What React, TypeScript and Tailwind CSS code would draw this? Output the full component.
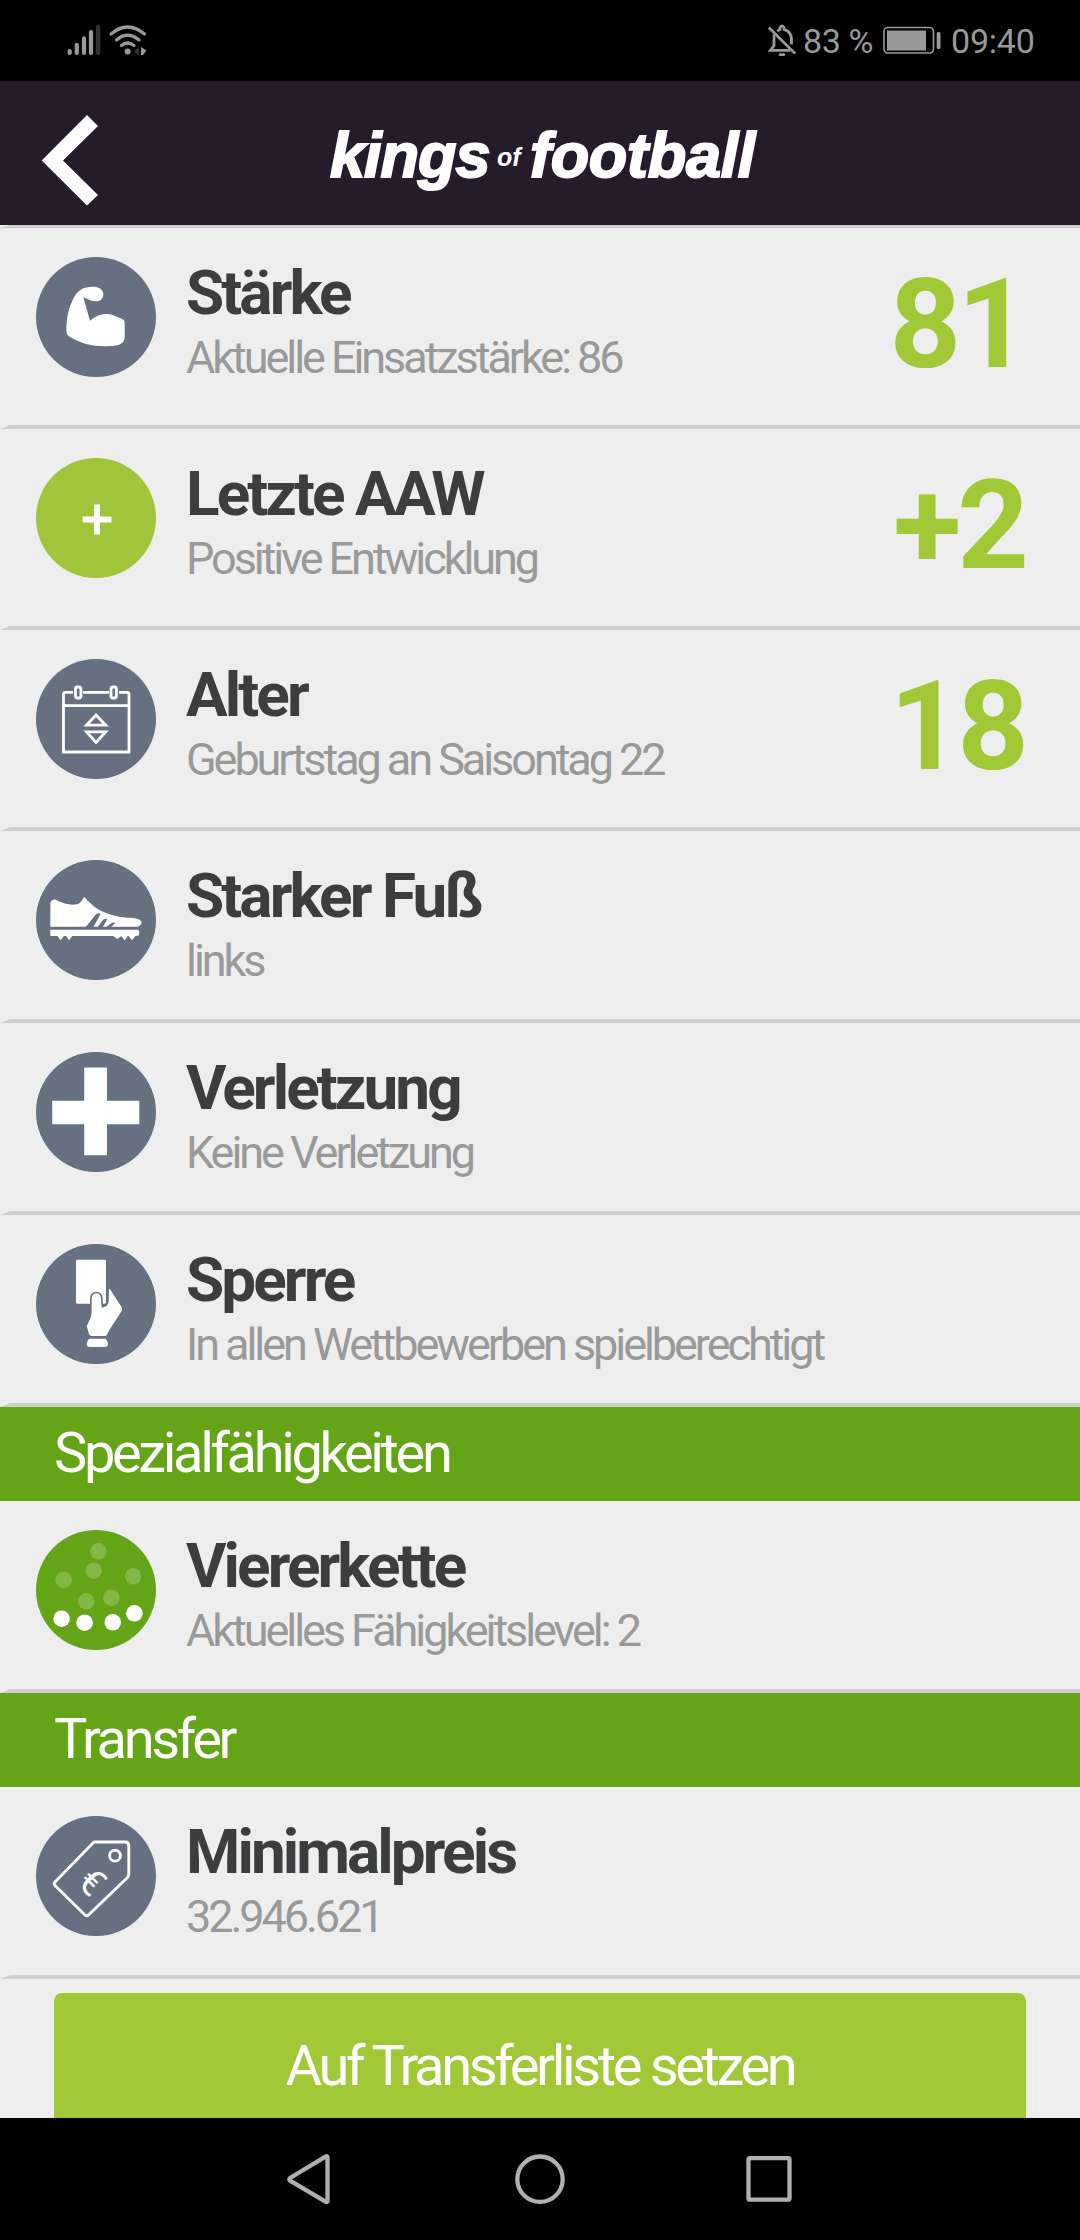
import { ReactNode } from "react";

const SLATE = "#667080";

function ArmIcon() {
  return (
    <svg viewBox="0 0 360 360" className="size-full" fill="#fff">
      <path d="M162 191L142 121C155 126 163 132 177 133C196 134 203 122 202 110C200 96 188 89 172 89C145 88 125 98 112 125C98 152 92 180 91 215C91 232 94 236 106 242C135 258 165 267 195 267C215 268 232 268 246 264C262 259 266 250 266 236L266 200C267 190 262 187 252 183C235 175 222 170 207 171C188 172 178 180 162 191Z" />
    </svg>
  );
}

function PlusIcon() {
  return (
    <svg viewBox="0 0 120 120" className="size-full" stroke="#fff" strokeWidth="6">
      <path d="M46.5 61.5H75.5M61 46.5V76.5" />
    </svg>
  );
}

function CalendarIcon() {
  return (
    <svg viewBox="0 0 120 120" className="size-full" fill="none" stroke="#fff" strokeWidth="2.8">
      <path d="M37 33.3H29.5Q27.5 33.3 27.5 35.5V93H93V35.5Q93 33.3 91 33.3H83M47 33.3H73M27.5 46.7H93" />
      <rect x="39.5" y="28" width="5.4" height="11" rx="2" />
      <rect x="75" y="28" width="5.4" height="11" rx="2" />
      <path d="M60 56L69.7 66.2H50.5ZM60 83.5L69.7 72.8H50.5Z" />
    </svg>
  );
}

function ShoeIcon() {
  return (
    <svg viewBox="0 0 360 360" className="size-full" fill="#fff">
      <path d="M43 130C43 122 52 116 59 119C75 127 92 134 112 134C135 134 138 120 144 111C150 115 153 120 160 127C185 152 215 164 250 170C275 174 295 172 308 178C320 184 320 194 306 200H43Z" />
      <path
        fill={SLATE}
        d="M147 202L155 194L178 165Q184 158 194 161L172 202ZM184 202L202 179Q207 174 214 177L200 202ZM210 202L224 191Q230 185 238 189L224 202Z"
      />
      <path d="M43 209H306Q314 215 307 227L298 228L288 241L278 228H276L266 241L256 228L244 237L232 228H109L99 241L91 228H84L74 241L64 228H43Z" />
    </svg>
  );
}

function CrossIcon() {
  return (
    <svg viewBox="0 0 120 120" className="size-full" fill="#fff">
      <path d="M48.2 15.5H71V48.7H103.3V72.3H71V103.3H48.2V72.3H16.2V48.7H48.2Z" />
    </svg>
  );
}

function CardIcon() {
  return (
    <svg viewBox="0 0 360 360" className="size-full" fill="#fff">
      <rect x="120" y="47" width="90" height="132" rx="4" />
      <path
        stroke={SLATE}
        strokeWidth="10"
        paintOrder="stroke"
        d="M167 164Q168 148 181 148Q194 148 195 164L197 191Q216 190 218 172L219 134Q222 134 225 140L257 190Q260 195 257 201L220 258L213 272Q211 276 206 276H166Q160 276 158 268L152 246L164 221Q167 210 167 200Z"
      />
      <path d="M159 284H209Q216 292 216 300Q216 309 207 309H161Q152 309 152 300Q152 292 159 284Z" />
    </svg>
  );
}

function FormationIcon() {
  const others = [
    [62.4, 21.3],
    [57.7, 40.7],
    [27.7, 49.7],
    [97.1, 46.3],
    [75.4, 67.7],
    [50.3, 71.3],
  ];
  const defence = [
    [25.6, 88.7],
    [48.6, 92.7],
    [76.8, 92.3],
    [98.4, 83.3],
  ];
  return (
    <svg viewBox="0 0 120 120" className="size-full" fill="#fff">
      {others.map(([x, y]) => (
        <circle key={x} cx={x} cy={y} r="8.3" opacity="0.2" />
      ))}
      {defence.map(([x, y]) => (
        <circle key={x} cx={x} cy={y} r="8.3" />
      ))}
    </svg>
  );
}

function TagIcon() {
  return (
    <svg viewBox="0 0 120 120" className="size-full">
      <g fill="none" stroke="#fff" strokeWidth="2.9" strokeLinejoin="round">
        <path d="M58.8 26H89Q92.8 26 92.8 30V58Q92.8 60 91.5 61.5L52.5 99Q50.8 100.6 49 99L19 69.5Q17.4 67.8 19 66L57 27Q58 26 58.8 26Z" />
        <circle cx="79" cy="39.7" r="5.4" />
      </g>
      <text
        transform="translate(56 66) rotate(45)"
        textAnchor="middle"
        y="12.5"
        fill="#fff"
        className="font-[Roboto] text-[37px]"
      >
        €
      </text>
    </svg>
  );
}

type RowProps = {
  icon: ReactNode;
  color?: string;
  title: string;
  text: string;
  value?: string;
};

function Row({ icon, color = "bg-[#667080]", title, text, value }: RowProps) {
  return (
    <div
      className={`flex shrink-0 border-b-4 border-l-[10px] border-b-[#cfcfcf] border-l-transparent pl-[26px] ${
        value ? "h-[201px]" : "h-48"
      }`}
    >
      <div className={`mt-[29px] size-[120px] shrink-0 overflow-hidden rounded-full ${color}`}>{icon}</div>
      <div className="ml-[30px] grow pt-[33px] whitespace-nowrap">
        <h2 className="text-[62px] leading-16 font-bold tracking-[-2.9px] text-[#3c3d3f]">{title}</h2>
        <p className="text-[45px] leading-[65px] tracking-[-3.06px] text-[#999]">{text}</p>
      </div>
      {value && (
        <div className="pt-[34px] pr-[55px] text-right text-[125px] leading-[125px] font-bold tracking-[-4px] text-[#a0c837]">
          {value}
        </div>
      )}
    </div>
  );
}

function Section({ title }: { title: string }) {
  return (
    <div className="h-[94px] shrink-0 bg-[#64a518] pl-[54px] text-[56px] leading-[92px] tracking-[-3.35px] text-white">
      {title}
    </div>
  );
}

function StatusBar() {
  return (
    <div className="flex h-[81px] shrink-0 items-start bg-black text-[34px] text-[#999]">
      <svg width="160" height="81" fill="none" stroke="#999" strokeLinecap="round">
        <g strokeWidth="4.2">
          <path d="M69.7 51.1V52.9M76.8 44.8V52.9M84 38.4V52.9M91 32V52.9" />
          <path d="M98.1 26.8V52.9" stroke="#333" />
        </g>
        <g strokeWidth="3.2">
          <path d="M111 34Q127.5 20 144.5 34M116.5 40Q127.5 30.5 139 40M121.5 45.5Q127.5 40.5 134 45.5" />
        </g>
        <circle cx="127.6" cy="51.5" r="3" fill="#999" stroke="none" />
        <path d="M134 51.5L139 47V55Z" fill="#333" stroke="none" />
        <path d="M141 47L146.5 50.5L143 55H141Z" fill="#999" stroke="none" />
      </svg>
      <svg className="mt-6 ml-[608px]" width="28" height="32" viewBox="0 0 28 32" fill="none" stroke="#999" strokeWidth="2.8">
        <path d="M0.8 3.6L27.2 29.6" />
        <path d="M6 10.5V21.5L2.5 26.3H22" />
        <path d="M9.5 7.5Q10.5 5.8 12 5.4V3.5Q14 0.5 16 3.5V5.4Q23.5 8 23.5 15V20.5" />
        <path d="M11.2 30Q14 32 16.8 30" />
      </svg>
      <span className="ml-[7px] w-[80px] pt-[21px] leading-10 tracking-[-0.4px] whitespace-nowrap">83 %</span>
      <svg className="mt-[26px]" width="58" height="28" viewBox="0 0 58 28">
        <rect x="1" y="1.5" width="49.5" height="25.5" rx="4" fill="none" stroke="#999" strokeWidth="1.6" />
        <rect x="4" y="4.5" width="39" height="20" fill="#999" />
        <rect x="53.7" y="6" width="3.8" height="17" rx="1.5" fill="#999" />
      </svg>
      <span className="ml-[10px] pt-[21px] leading-10 tracking-[-0.2px]">09:40</span>
    </div>
  );
}

function Header() {
  return (
    <div className="flex h-36 shrink-0 items-start bg-[#241c2a] text-white">
      <svg className="mt-8 ml-[41px]" width="58" height="94" viewBox="0 0 58 94" fill="#fff">
        <path d="M46 2L57 13L22 47.5L57 82L46 92.5L0.7 47.5Z" />
      </svg>
      <div className="mt-[42px] ml-[231px] flex items-baseline font-['Liberation_Sans'] text-[63px] leading-16 font-bold whitespace-nowrap italic">
        <span className="w-[167px] tracking-[-1px] [-webkit-text-stroke:2px_#fff]">kings</span>
        <span className="relative -top-[11px] w-[33px] text-[25px] leading-none">of</span>
        <span className="tracking-[-0.3px] [-webkit-text-stroke:2px_#fff]">football</span>
      </div>
    </div>
  );
}

function NavBar() {
  return (
    <div className="h-[122px] shrink-0 bg-black">
      <svg width="1080" height="122" fill="none" stroke="#b0b0b0" strokeWidth="4.3" strokeLinejoin="round">
        <path d="M327.5 39.5Q327.5 37.5 325.5 38.7L290 60Q288.5 61.3 290 62.6L325.5 83.7Q327.5 84.8 327.5 83Z" />
        <circle cx="540" cy="61.2" r="22.7" />
        <rect x="748.5" y="40.2" width="41" height="41.5" rx="1.5" />
      </svg>
    </div>
  );
}

export default function App() {
  return (
    <div className="flex h-[2240px] w-[1080px] flex-col overflow-hidden bg-[#eee] font-[Roboto,sans-serif]">
      <StatusBar />
      <Header />
      <div className="flex min-h-0 grow flex-col overflow-hidden">
        <div className="h-[3px] shrink-0 border-b-[3px] border-l-[10px] border-b-[#d2cbd2] border-l-transparent" />
        <Row icon={<ArmIcon />} title="Stärke" text="Aktuelle Einsatzstärke: 86" value="81" />
        <Row
          icon={<PlusIcon />}
          color="bg-[#a0c53a]"
          title="Letzte AAW"
          text="Positive Entwicklung"
          value="+2"
        />
        <Row icon={<CalendarIcon />} title="Alter" text="Geburtstag an Saisontag 22" value="18" />
        <Row icon={<ShoeIcon />} title="Starker Fuß" text="links" />
        <Row icon={<CrossIcon />} title="Verletzung" text="Keine Verletzung" />
        <Row icon={<CardIcon />} title="Sperre" text="In allen Wettbewerben spielberechtigt" />
        <Section title="Spezialfähigkeiten" />
        <Row icon={<FormationIcon />} color="bg-[#64a518]" title="Viererkette" text="Aktuelles Fähigkeitslevel: 2" />
        <Section title="Transfer" />
        <Row icon={<TagIcon />} title="Minimalpreis" text="32.946.621" />
        <button className="mx-[54px] mt-[14px] h-[146px] shrink-0 rounded-lg bg-[#a0c837] text-[56px] tracking-[-3.35px] text-white">
          Auf Transferliste setzen
        </button>
      </div>
      <NavBar />
    </div>
  );
}
